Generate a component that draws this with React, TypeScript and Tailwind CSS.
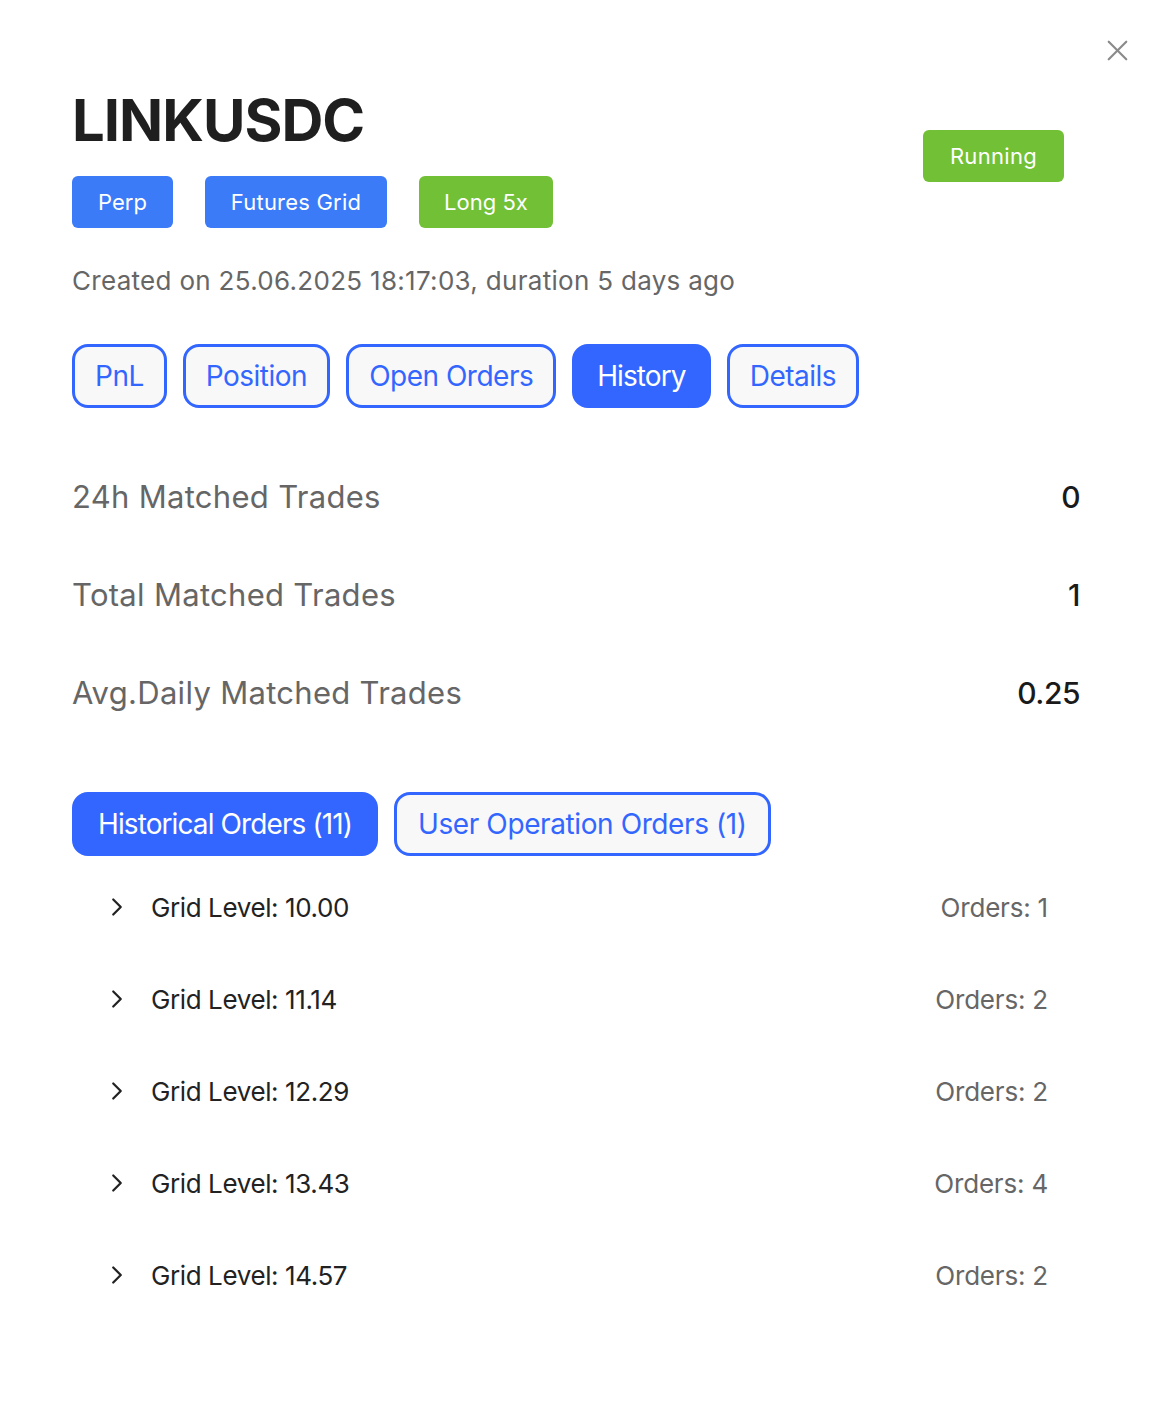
import { X, ChevronRight } from 'lucide-react';

const tabs = ['PnL', 'Position', 'Open Orders', 'History', 'Details'];

const stats = [
  { label: '24h Matched Trades', value: '0' },
  { label: 'Total Matched Trades', value: '1' },
  { label: 'Avg.Daily Matched Trades', value: '0.25' },
];

const levels = [
  { price: '10.00', orders: 1 },
  { price: '11.14', orders: 2 },
  { price: '12.29', orders: 2 },
  { price: '13.43', orders: 4 },
  { price: '14.57', orders: 2 },
];

export default function App() {
  return (
    <div
      className="relative w-[1158px] h-[1404px] bg-white"
      style={{ fontFamily: 'Inter, "Open Sans", sans-serif' }}
    >
      {/* close */}
      <button className="absolute right-[23px] top-[33px] text-[#8a8a8a]">
        <X size={35} strokeWidth={1.5} />
      </button>

      <div className="px-[72px] pt-[88px]">
        <div className="flex justify-between">
          <div>
            <h1 className="text-[58px] font-bold leading-[64px] tracking-[-1px] text-[#1f1f1f]">LINKUSDC</h1>
            <div className="flex gap-8 mt-[24px]">
              <span className="h-[52px] px-[26px] flex items-center rounded-[6px] bg-[#3b7bf8] text-white text-[22px]">Perp</span>
              <span className="h-[52px] px-[26px] flex items-center rounded-[6px] bg-[#3b7bf8] text-white text-[22px] tracking-[0.2px]">Futures Grid</span>
              <span className="h-[52px] px-[25px] flex items-center rounded-[6px] bg-[#72c035] text-white text-[22px]">Long 5x</span>
            </div>
          </div>
          <div className="pt-[42px] pr-[22px]">
            <span className="h-[52px] px-[27px] flex items-center rounded-[6px] bg-[#72c035] text-white text-[22px] tracking-[0.3px]">Running</span>
          </div>
        </div>

        <p className="mt-[37px] text-[26px] leading-[32px] text-[#666666] tracking-[0.3px]">
          Created on 25.06.2025 18:17:03, duration 5 days ago
        </p>

        <div className="flex gap-4 mt-[47px]">
          {tabs.map((t) => (
            <button
              key={t}
              className={
                t === 'History'
                  ? 'h-[64px] px-[22px] rounded-[16px] border-[3px] border-[#3366ff] bg-[#3366ff] text-white text-[28px] tracking-[-0.9px]'
                  : 'h-[64px] px-[20px] rounded-[16px] border-[3px] border-[#3366ff] bg-[#f8f8f8] text-[#3366ff] text-[28px] tracking-[-0.5px]'
              }
            >
              {t}
            </button>
          ))}
        </div>

        <div className="mt-[40px] pr-[6px]">
          {stats.map((s) => (
            <div key={s.label} className="flex justify-between items-center h-[98px]">
              <span className="text-[31px] text-[#666666] tracking-[0.3px]">{s.label}</span>
              <span className="text-[30px] text-[#1a1a1a] font-medium tracking-[-0.5px]">{s.value}</span>
            </div>
          ))}
        </div>

        <div className="flex gap-4 mt-[50px]">
          <button className="h-[64px] px-[23px] rounded-[16px] border-[3px] border-[#3366ff] bg-[#3366ff] text-white text-[28px] tracking-[-0.9px]">
            Historical Orders (11)
          </button>
          <button className="h-[64px] px-[21px] rounded-[16px] border-[3px] border-[#3366ff] bg-[#f8f8f8] text-[#3366ff] text-[28px] tracking-[-0.4px]">
            User Operation Orders (1)
          </button>
        </div>

        <div className="mt-[5px] pl-[30px] pr-[32px]">
          {levels.map((l) => (
            <div key={l.price} className="flex items-center justify-between h-[92px]">
              <div className="flex items-center gap-[19px]">
                <ChevronRight size={30} strokeWidth={1.8} className="text-[#222222]" />
                <span className="text-[26px] text-[#222222] tracking-[-0.4px]">Grid Level: {l.price}</span>
              </div>
              <span className="text-[26px] text-[#666666] tracking-[-0.2px] pr-[6px]">Orders: {l.orders}</span>
            </div>
          ))}
        </div>
      </div>
    </div>
  );
}
